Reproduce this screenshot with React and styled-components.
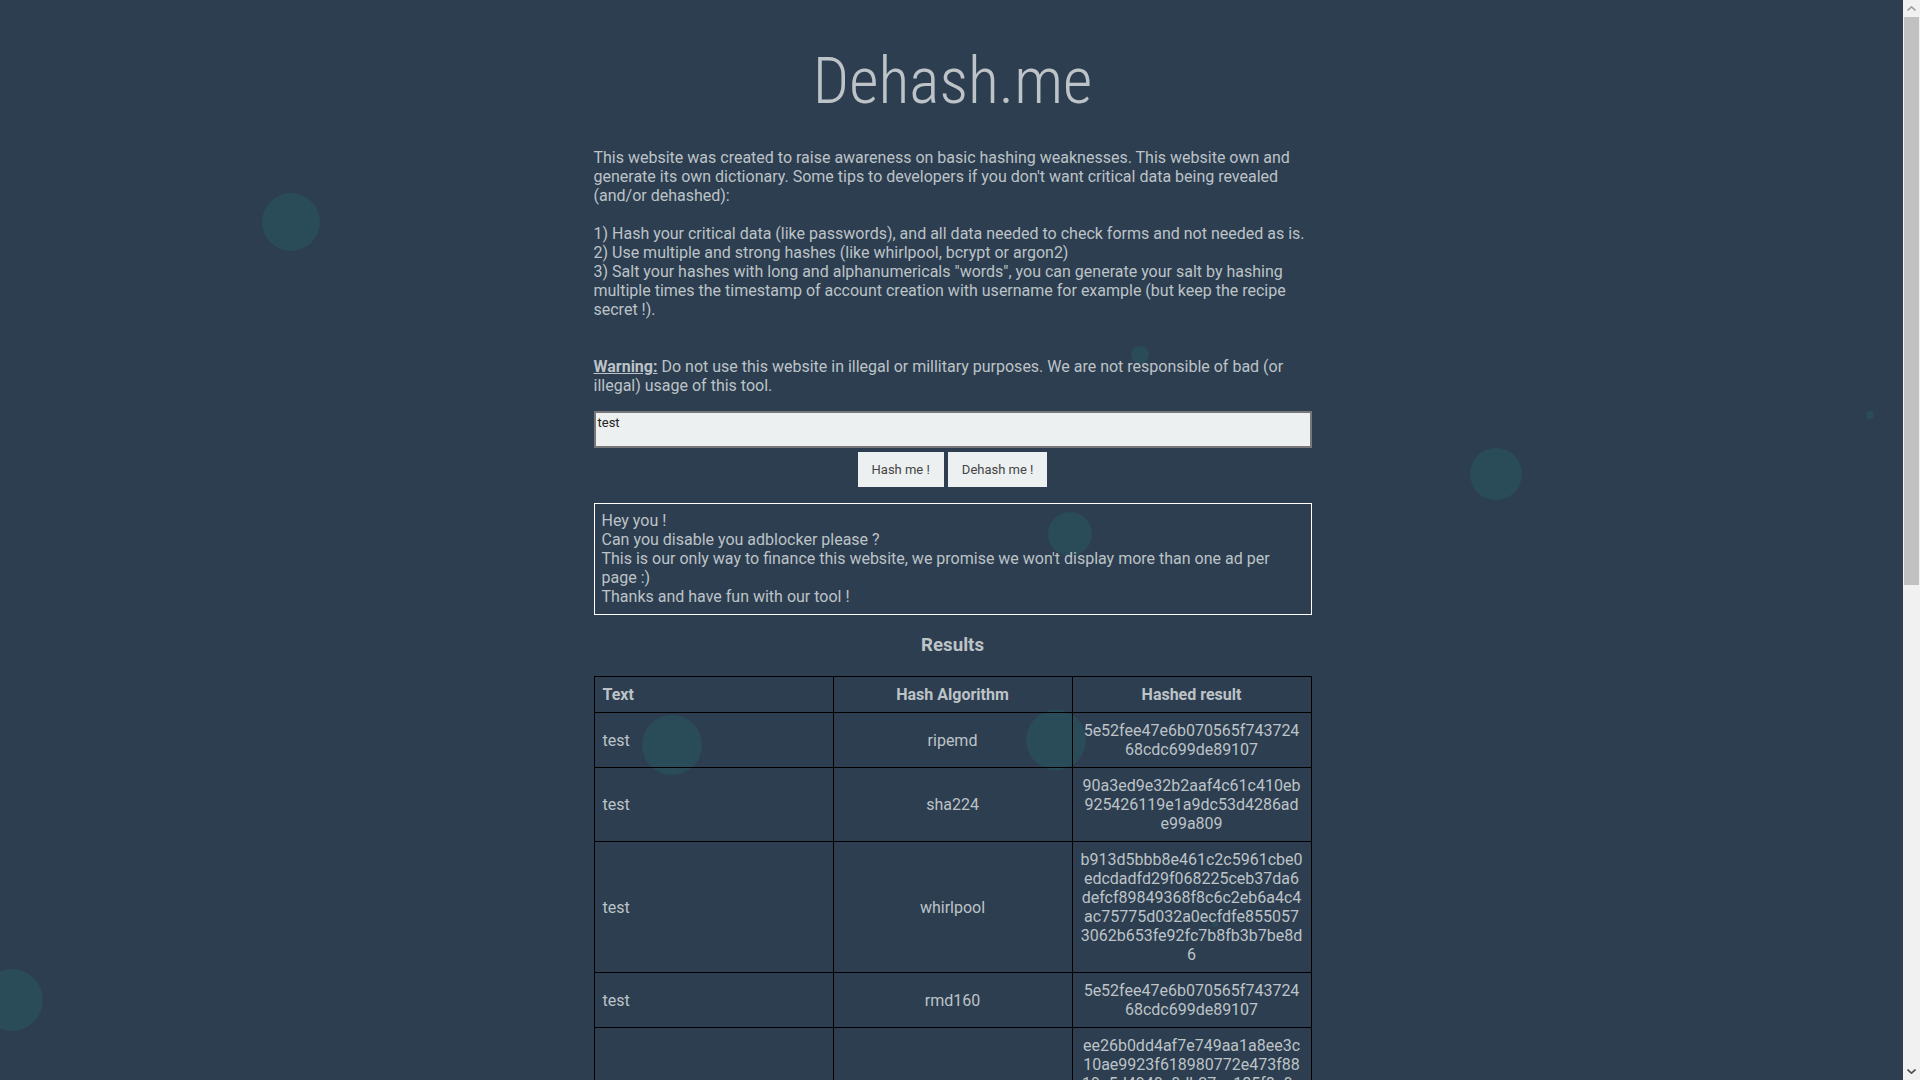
import React from 'react'
import styled, { createGlobalStyle } from 'styled-components'

const GlobalStyle = createGlobalStyle`
  html, body {
    margin: 0;
    padding: 0;
    background: #2c3e50;
  }
  body {
    padding-right: 15px;
    font-family: Roboto, "Liberation Sans", sans-serif;
    color: #bdc3c7;
    font-size: 16px;
  }
`;

const Particles = styled.svg`
  position: absolute;
  top: 0;
  left: 0;
  width: 1903px;
  height: 1300px;
  z-index: 0;
  pointer-events: none;
`;

/* fake browser scrollbar, sits over the right edge of the viewport */
const Scrollbar = styled.div`
  position: fixed;
  top: 0;
  right: 0;
  width: 17px;
  height: 100vh;
  background: #f1f1f1;
  z-index: 5;
  display: flex;
  flex-direction: column;
  align-items: center;
`;

const Arrow = styled.div`
  width: 17px;
  height: 17px;
  display: flex;
  align-items: center;
  justify-content: center;
  flex: none;
`;

const Thumb = styled.div`
  width: 15px;
  height: 568px;
  background: #c1c1c1;
  flex: none;
`;

const Spacer = styled.div`
  flex: 1;
`;

const Page = styled.div`
  position: relative;
  z-index: 1;
  width: 718px;
  margin: 0 auto;
  padding-bottom: 40px;
`;

const Title = styled.h1`
  margin: 44px 0 29px;
  font-family: "Roboto Condensed", Roboto, sans-serif;
  font-stretch: condensed;
  font-size: 64px;
  font-weight: 300;
  line-height: 75px;
  text-align: center;
  color: #bdc3c7;
`;

const Intro = styled.p`
  margin: 0 0 16px;
  line-height: 19px;
`;

const Warn = styled.u`
  font-weight: bold;
`;

const Input = styled.textarea`
  display: block;
  box-sizing: border-box;
  width: 100%;
  height: 37px;
  margin: 0;
  padding: 2px;
  border: 2px solid #777;
  background: #ecf0f1;
  color: #222;
  font-family: inherit;
  font-size: 13px;
  resize: none;
`;

const Actions = styled.div`
  display: flex;
  justify-content: center;
  gap: 4px;
  margin-top: 4px;
`;

const Button = styled.button`
  height: 35px;
  padding: 0 14px;
  border: none;
  background: #ecf0f1;
  color: #444;
  font-family: inherit;
  font-size: 13px;
`;

const Notice = styled.div`
  margin-top: 16px;
  padding: 7px 7px 8px;
  border: 1px solid #fff;
  line-height: 19px;
`;

const Heading = styled.h3`
  margin: 19px 0 20px;
  font-size: 18.7px;
  line-height: 22px;
  text-align: center;
`;

const Table = styled.table`
  width: 100%;
  border-collapse: collapse;
  table-layout: fixed;
`;

const Th = styled.th`
  border: 1px solid #000;
  padding: 8px;
  line-height: 19px;
  text-align: ${p => p.$left ? 'left' : 'center'};
`;

const Td = styled.td`
  border: 1px solid #000;
  padding: 8px;
  line-height: 19px;
  vertical-align: middle;
  text-align: ${p => p.$left ? 'left' : 'center'};
  word-break: break-all;
`;

const bubbles = [
  [291, 222, 29], [1140, 355, 9], [1870, 415, 4], [1496, 474, 26],
  [1070, 534, 22], [672, 745, 30], [1056, 740, 30], [12, 1000, 31], [1215, 924, 3],
];

const rows = [
  ['ripemd', '5e52fee47e6b070565f74372468cdc699de89107'],
  ['sha224', '90a3ed9e32b2aaf4c61c410eb925426119e1a9dc53d4286ade99a809'],
  ['whirlpool', 'b913d5bbb8e461c2c5961cbe0edcdadfd29f068225ceb37da6defcf89849368f8c6c2eb6a4c4ac75775d032a0ecfdfe8550573062b653fe92fc7b8fb3b7be8d6'],
  ['rmd160', '5e52fee47e6b070565f74372468cdc699de89107'],
  ['sha512', 'ee26b0dd4af7e749aa1a8ee3c10ae9923f618980772e473f8819a5d4940e0db27ac185f8a0e1d5f84f88bc887fd67b143732c304cc5fa9ad8e6f57f50028a8ff'],
];

export default function App() {
  return (
    <>
      <GlobalStyle />
      <Particles>
        {bubbles.map(([x, y, r], i) => (
          <circle key={i} cx={x} cy={y} r={r} fill="#1abc9c" fillOpacity="0.11" />
        ))}
      </Particles>
      <Scrollbar>
        <Arrow>
          <svg width="9" height="5" viewBox="0 0 9 5"><path d="M0.5 4.5 L4.5 0.8 L8.5 4.5" fill="none" stroke="#a3a3a3" strokeWidth="1.6" /></svg>
        </Arrow>
        <Thumb />
        <Spacer />
        <Arrow>
          <svg width="9" height="5" viewBox="0 0 9 5"><path d="M0.5 0.5 L4.5 4.2 L8.5 0.5" fill="none" stroke="#505050" strokeWidth="1.6" /></svg>
        </Arrow>
      </Scrollbar>
      <Page>
        <Title>Dehash.me</Title>
        <Intro>
          This website was created to raise awareness on basic hashing weaknesses. This website own and generate its own dictionary. Some tips to developers if you don't want critical data being revealed (and/or dehashed):<br /><br />
          1) Hash your critical data (like passwords), and all data needed to check forms and not needed as is.<br />
          2) Use multiple and strong hashes (like whirlpool, bcrypt or argon2)<br />
          3) Salt your hashes with long and alphanumericals "words", you can generate your salt by hashing multiple times the timestamp of account creation with username for example (but keep the recipe secret !).<br /><br /><br />
          <Warn>Warning:</Warn> Do not use this website in illegal or millitary purposes. We are not responsible of bad (or illegal) usage of this tool.
        </Intro>
        <Input defaultValue="test" />
        <Actions>
          <Button>Hash me !</Button>
          <Button>Dehash me !</Button>
        </Actions>
        <Notice>
          Hey you !<br />
          Can you disable you adblocker please ?<br />
          This is our only way to finance this website, we promise we won't display more than one ad per page :)<br />
          Thanks and have fun with our tool !
        </Notice>
        <Heading>Results</Heading>
        <Table>
          <thead>
            <tr>
              <Th $left>Text</Th>
              <Th>Hash Algorithm</Th>
              <Th>Hashed result</Th>
            </tr>
          </thead>
          <tbody>
            {rows.map(([algo, hash]) => (
              <tr key={algo}>
                <Td $left>test</Td>
                <Td>{algo}</Td>
                <Td>{hash}</Td>
              </tr>
            ))}
          </tbody>
        </Table>
      </Page>
    </>
  );
}
